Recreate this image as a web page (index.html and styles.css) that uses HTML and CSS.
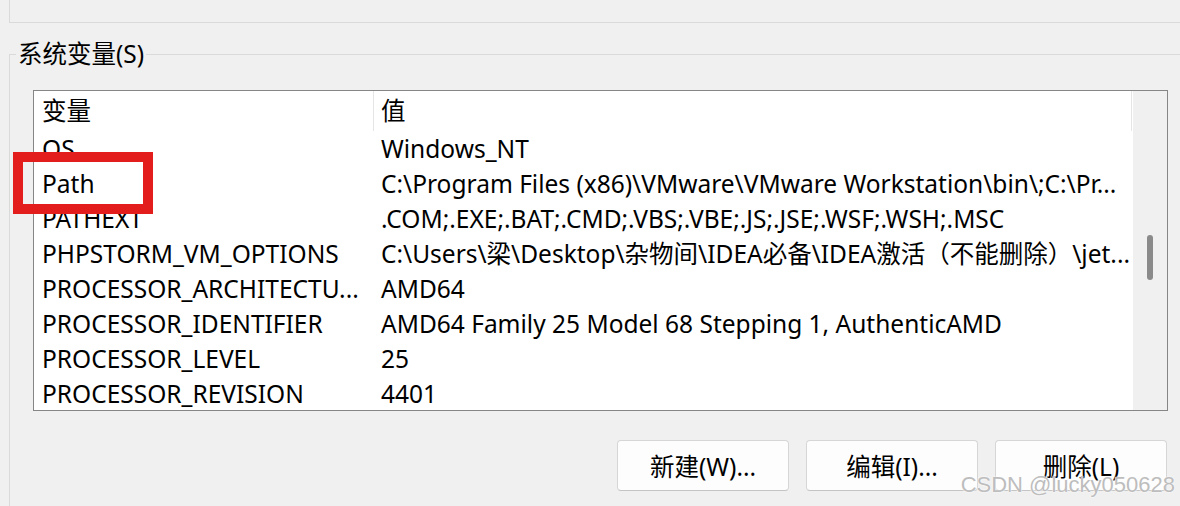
FILE: index.html
```html
<!DOCTYPE html>
<html lang="zh-CN">
<head>
    <meta charset="UTF-8">
    <meta name="viewport" content="width=device-width, initial-scale=1.0">
    <title>环境变量</title>
    <link rel="stylesheet" href="styles.css">
</head>
<body>
    <div class="user-group"></div>

    <fieldset class="sys-group">
        <legend>系统变量(S)</legend>

        <div class="var-list">
            <div class="var-table">
                <div class="var-row head">
                    <div class="cell">变量</div>
                    <div class="cell">值</div>
                </div>
                <div class="var-row">
                    <div class="cell">OS</div>
                    <div class="cell">Windows_NT</div>
                </div>
                <div class="var-row">
                    <div class="cell">Path</div>
                    <div class="cell">C:\Program Files (x86)\VMware\VMware Workstation\bin\;C:\Pr...</div>
                </div>
                <div class="var-row">
                    <div class="cell">PATHEXT</div>
                    <div class="cell">.COM;.EXE;.BAT;.CMD;.VBS;.VBE;.JS;.JSE;.WSF;.WSH;.MSC</div>
                </div>
                <div class="var-row">
                    <div class="cell">PHPSTORM_VM_OPTIONS</div>
                    <div class="cell">C:\Users\梁\Desktop\杂物间\IDEA必备\IDEA激活（不能删除）\jet...</div>
                </div>
                <div class="var-row">
                    <div class="cell">PROCESSOR_ARCHITECTU...</div>
                    <div class="cell">AMD64</div>
                </div>
                <div class="var-row">
                    <div class="cell">PROCESSOR_IDENTIFIER</div>
                    <div class="cell">AMD64 Family 25 Model 68 Stepping 1, AuthenticAMD</div>
                </div>
                <div class="var-row">
                    <div class="cell">PROCESSOR_LEVEL</div>
                    <div class="cell">25</div>
                </div>
                <div class="var-row">
                    <div class="cell">PROCESSOR_REVISION</div>
                    <div class="cell">4401</div>
                </div>
            </div>
            <div class="scrollbar">
                <div class="thumb"></div>
            </div>
        </div>

        <div class="actions">
            <button>新建(W)...</button>
            <button>编辑(I)...</button>
            <button>删除(L)</button>
        </div>
    </fieldset>

    <div class="highlight"></div>
    <div class="watermark">CSDN @lucky050628</div>
</body>
</html>
```

FILE: styles.css
```css
* {
    margin: 0;
    padding: 0;
    box-sizing: border-box;
}

body {
    position: relative;
    width: 1180px;
    height: 506px;
    overflow: hidden;
    background: #f0f0f0;
    font-family: 'Noto Sans', 'Noto Sans CJK SC', sans-serif;
    font-size: 24.5px;
    color: #000;
}

/* kawałek grupy zmiennych użytkownika nad nami */
.user-group {
    height: 23px;
    margin-left: 9px;
    border-left: 1px solid #dadada;
    border-bottom: 1px solid #dadada;
}

.sys-group {
    margin: 16px 0 0 9px;
    padding: 0;
    border: 1px solid #dadada;
    border-right: none;
    border-bottom: none;
    min-width: 0;
    height: 467px;
}

.sys-group legend {
    margin-left: 6px;
    padding: 0 2px;
    line-height: 30px;
}

.var-list {
    display: flex;
    width: 1135px;
    height: 321px;
    margin: 21px 0 0 23px;
    background: #fff;
    border: 1px solid #868686;
}

.var-table {
    flex: 1;
    overflow: hidden;
}

.var-row {
    display: grid;
    grid-template-columns: 340px 758px;
    height: 35px;
    line-height: 35px;
}

.var-row.head {
    height: 40px;
    line-height: 40px;
}

.cell {
    padding-left: 8px;
    white-space: nowrap;
    overflow: hidden;
}

.cell + .cell {
    padding-left: 7px;
}

.head .cell {
    border-right: 1px solid #e5e5e5;
}

.scrollbar {
    width: 34px;
    background: #f0f0f0;
    padding: 144px 0 0 14px;
}

.thumb {
    width: 6px;
    height: 45px;
    border-radius: 3px;
    background: #8a8a8a;
}

.actions {
    display: flex;
    justify-content: flex-end;
    gap: 17px;
    margin-top: 29px;
    padding-right: 13px;
}

button {
    width: 172px;
    height: 51px;
    font-family: inherit;
    font-size: 24.5px;
    color: #000;
    background: #fdfdfd;
    border: 1px solid #d6d6d6;
    border-bottom-color: #c4c4c4;
    border-radius: 4px;
}

/* czerwona ramka z zrzutu */
.highlight {
    position: absolute;
    left: 13px;
    top: 152px;
    width: 140px;
    height: 62px;
    border: 10px solid #e31c1c;
}

.watermark {
    position: absolute;
    right: 5px;
    bottom: 8px;
    font-family: 'Liberation Sans', sans-serif;
    font-size: 22px;
    color: #bdbdbd;
    text-shadow: 0 0 2px #fff, 0 0 1px #fff;
}
```
